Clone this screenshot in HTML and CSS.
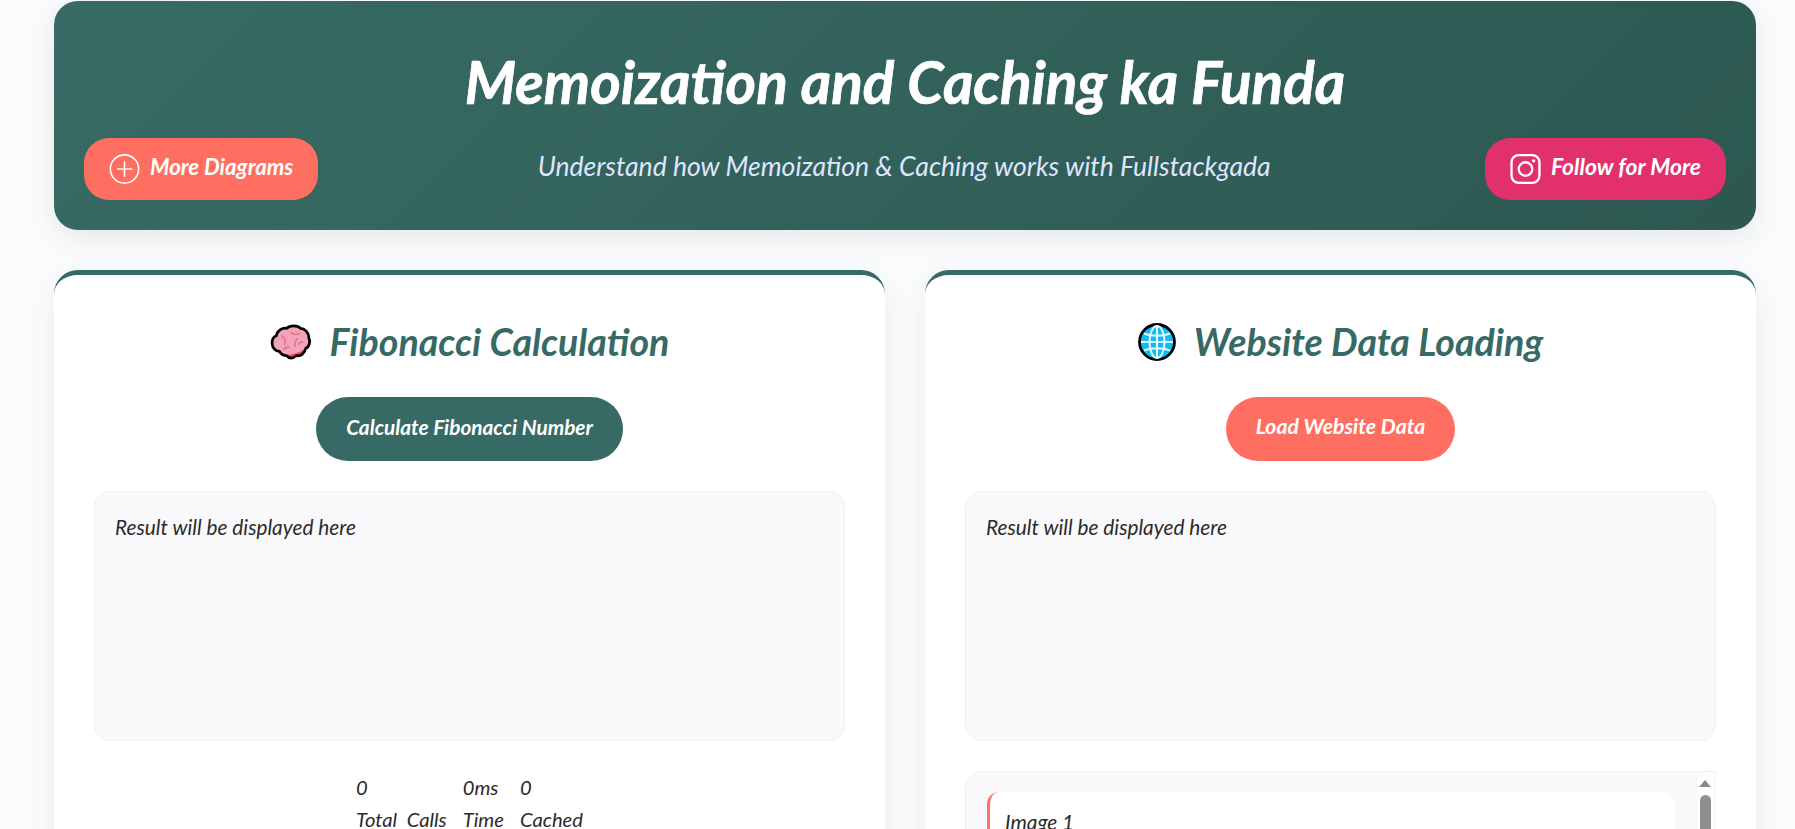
FILE: index.html
```html
<!DOCTYPE html>
<html lang="en">
<head>
<meta charset="utf-8">
<title>Memoization and Caching ka Funda</title>
<link rel="stylesheet" href="styles.css">
</head>
<body>
<div class="container">
  <header class="hero">
    <h1 class="hero-title">Memoization and Caching ka Funda</h1>
    <div class="hero-row">
      <a class="pill pill-coral" href="#">
        <svg class="pill-icon" viewBox="0 0 32 32" fill="none" stroke="#fff" stroke-width="1.6" stroke-linecap="round"><circle cx="16" cy="16" r="14.6"/><path d="M16 8.5v15M8.5 16h15"/></svg>
        <span>More Diagrams</span>
      </a>
      <p class="hero-sub">Understand how Memoization &amp; Caching works with Fullstackgada</p>
      <a class="pill pill-pink" href="#">
        <svg class="pill-icon" viewBox="0 0 32 32" fill="none" stroke="#fff" stroke-width="2.4"><rect x="1.6" y="1.6" width="28.8" height="28.8" rx="7.5"/><circle cx="16" cy="16" r="7"/><circle cx="24.4" cy="7.6" r="1.7" fill="#fff" stroke="none"/></svg>
        <span>Follow for More</span>
      </a>
    </div>
  </header>
  <main class="panels">
    <section class="panel">
      <h2 class="panel-title">
        <svg class="emoji-brain" viewBox="0 0 40 34"><path d="M6 11C7 6 12 3 16 4 19 1 26 1 29 4 33 4 37 8 37 13 39 17 37 22 34 23 33 28 29 31 25 30 22 33 18 33 16 30 13 30 10 28 9 26 5 26 2 22 2 18 2 15 3 12 6 11Z" fill="#f4a4b8"/><path d="M17 29c5 0 12-2 17-6-1 5-5 8-9 7-3 3-7 3-9 0z" fill="#ee4a60"/><path d="M11 11c3 2 4 5 3 8M20 8c2 2 5 2 8 1M26 14c-2 2-3 4-2 7M31 17c-2 0-3 1-4 2M13 24c1-1 3-2 5-2" fill="none" stroke="#e27a98" stroke-width="1.8" stroke-linecap="round"/><path d="M6 11C7 6 12 3 16 4 19 1 26 1 29 4 33 4 37 8 37 13 39 17 37 22 34 23 33 28 29 31 25 30 22 33 18 33 16 30 13 30 10 28 9 26 5 26 2 22 2 18 2 15 3 12 6 11Z" fill="none" stroke="#000" stroke-width="2.6" stroke-linejoin="round"/></svg>
        <span>Fibonacci Calculation</span>
      </h2>
      <div class="action"><button class="cta cta-teal" type="button">Calculate Fibonacci Number</button></div>
      <div class="result">Result will be displayed here</div>
      <div class="stats">
        <div class="stat"><div>0</div><div>Total Calls</div></div>
        <div class="stat"><div>0ms</div><div>Time</div></div>
        <div class="stat"><div>0</div><div>Cached</div></div>
      </div>
    </section>
    <section class="panel">
      <h2 class="panel-title">
        <svg class="emoji-globe" viewBox="0 0 38 38"><circle cx="19" cy="19" r="17.5" fill="#13bdf0" stroke="#000" stroke-width="2.8"/><g fill="none" stroke="#e6f8ff" stroke-width="2"><ellipse cx="19" cy="19" rx="7.5" ry="16"/><path d="M19 3v32M3 19h32M6 10.5c7 3 19 3 26 0M6 27.5c7-3 19-3 26 0"/></g></svg>
        <span>Website Data Loading</span>
      </h2>
      <div class="action"><button class="cta cta-coral" type="button"><span class="cta-label">Load Website Data</span></button></div>
      <div class="result">Result will be displayed here</div>
      <div class="image-list">
        <div class="image-item">Image 1</div>
        <span class="sb-track"></span>
        <span class="sb-arrow"></span>
        <span class="sb-thumb"></span>
      </div>
    </section>
  </main>
</div>
</body>
</html>
```
FILE: styles.css
```css
html, body { margin: 0; height: 829px; overflow: hidden; }
body { background: #f9fbfd; font-family: "Lato", sans-serif; font-style: italic; color: #2b2b2b; }
.container { padding: 1px 39px 0 54px; }
.hero { height: 229px; box-sizing: border-box; padding: 29px 30px 30px; border-radius: 24px; color: #fff; background: linear-gradient(135deg, #386b65, #2c5850); box-shadow: 0 8px 30px rgba(0,0,0,.08); }
.hero-title { margin: 0; height: 108px; line-height: 102px; text-align: center; font-size: 58.5px; font-weight: 700; -webkit-text-stroke: .7px #fff; }
.hero-row { display: flex; align-items: center; justify-content: space-between; }
.hero-sub { margin: -6px 0 0 5px; font-size: 26.55px; color: #dfe5ff; }
.pill { display: flex; align-items: center; gap: 10px; height: 62px; padding: 0 25px; border-radius: 25px; color: #fff; text-decoration: none; font-weight: 700; }
.pill span { margin-top: -6px; }
.pill-coral { background: #ff6f61; font-size: 22.2px; }
.pill-pink { background: #e1306c; font-size: 22.9px; }
.pill-icon { width: 31px; height: 32px; flex: none; }
.panels { display: grid; grid-template-columns: 1fr 1fr; gap: 40px; margin-top: 40px; }
.panel { background: #fff; border-top: 5px solid #386b65; border-radius: 24px; padding: 40px; height: 700px; box-shadow: 0 8px 30px rgba(0,0,0,.06); }
.panel-title { display: flex; align-items: center; justify-content: center; gap: 18px; margin: 0 0 28px; height: 54px; font-size: 37.6px; line-height: 52px; font-weight: 700; color: #386a65; }
.panel-title span { margin-top: 0; }
.emoji-brain { width: 42px; height: 36px; }
.emoji-globe { width: 38px; height: 38px; }
.action { display: flex; justify-content: center; margin-bottom: 30px; }
.cta { height: 64px; padding: 0 30px 6px; border: 0; border-radius: 32px; color: #fff; font: italic 700 20.8px "Lato", sans-serif; }
.cta-label { font-size: 21.2px; }
.cta-teal { background: #386a65; }
.cta-coral { background: #ff6f61; }
.result { height: 250px; box-sizing: border-box; padding: 20px; border: 1px solid #f0f1f3; border-radius: 16px; background: #f9f9fb; font-size: 20.8px; line-height: 30px; margin-bottom: 30px; }
.stats { display: flex; justify-content: center; gap: 16px; font-size: 20.2px; line-height: 32px; word-spacing: 5px; }
.image-list { position: relative; height: 300px; box-sizing: border-box; padding: 20px 40px 20px 21px; border: 1px solid #f0f1f3; border-radius: 16px 0 0 16px; background: #f9f9fb; overflow: hidden; }
.image-item { height: 150px; padding: 14px 15px; border-left: 3px solid #f4776a; border-radius: 12px; background: #fff; font-size: 20.8px; line-height: 32px; }
.sb-track { position: absolute; top: -1px; right: -1px; bottom: -1px; width: 18px; background: #fdfdfd; }
.sb-arrow { position: absolute; top: 8px; left: 733px; width: 0; height: 0; border: 6.5px solid transparent; border-top: 0; border-bottom: 7px solid #8a8a8a; }
.sb-thumb { position: absolute; top: 23px; left: 734px; width: 11px; height: 200px; border-radius: 6px; background: #8f8f8f; }
```
